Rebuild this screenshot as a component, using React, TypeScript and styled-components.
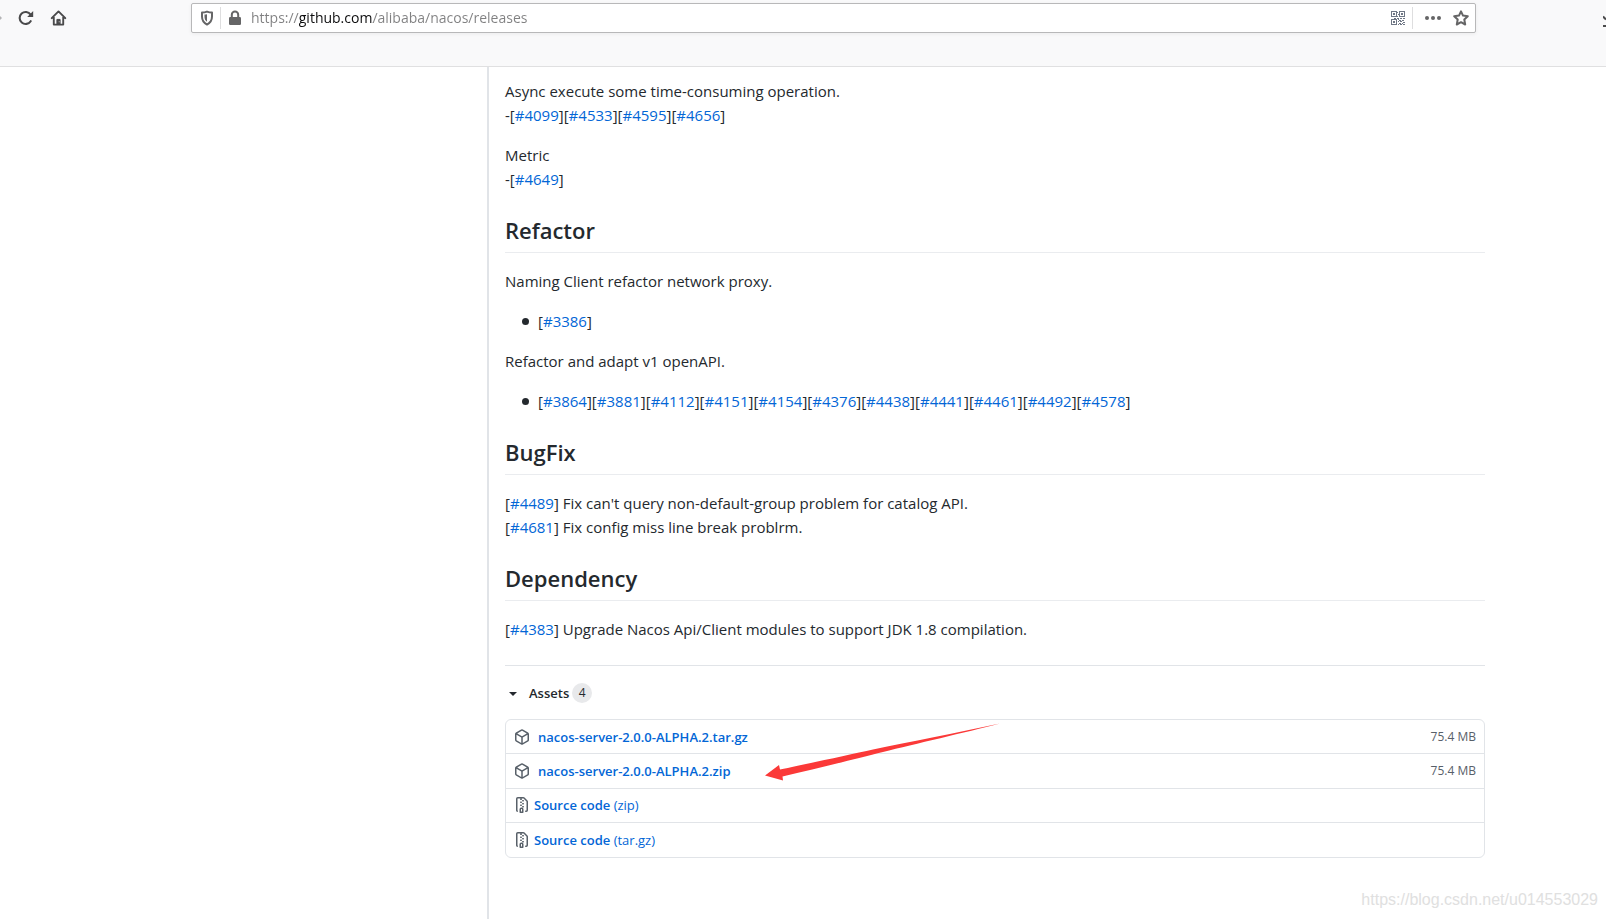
import React from "react";
import styled, { createGlobalStyle } from "styled-components";

const GlobalStyle = createGlobalStyle`
  *, *::before, *::after { box-sizing: border-box; }
  body {
    margin: 0;
    background: #fff;
    color: #24292e;
    font-family: "Open Sans", "Noto Sans", sans-serif;
    font-size: 15px;
    line-height: 24px;
  }
`;

const Page = styled.div`
  position: relative;
  display: flex;
  flex-direction: column;
  min-height: 100vh;
  overflow-x: hidden;
`;

const Toolbar = styled.header`
  display: flex;
  align-items: flex-start;
  height: 67px;
  padding-top: 3px;
  background: #f9f9fa;
  border-bottom: 1px solid #e0e0e1;
`;

const NavButtons = styled.nav`
  flex: 0 0 191px;
  display: flex;
  align-items: center;
  gap: 16px;
  height: 30px;
`;

const IconButton = styled.button<{ $color?: string }>`
  display: flex;
  flex: none;
  padding: 0;
  border: 0;
  background: none;
  color: ${(p) => p.$color ?? "#4a4a4b"};
`;

const AddressBar = styled.form`
  flex: 1;
  display: flex;
  align-items: center;
  height: 30px;
  padding: 0 6px 0 8px;
  border: 1px solid #b8b8b9;
  border-radius: 2px;
  background: #fff;
  box-shadow: 0 1px 4px rgba(0, 0, 0, 0.06);
`;

const Separator = styled.span<{ $before: number; $after: number }>`
  width: 1px;
  height: 22px;
  margin: 0 ${(p) => p.$after}px 0 ${(p) => p.$before}px;
  background: #dededf;
`;

const AddressInput = styled.input`
  flex: 1;
  min-width: 0;
  height: 26px;
  margin-left: 10px;
  padding: 0 0 1px;
  border: 0;
  outline: 0;
  font: 14px "Open Sans", "Noto Sans", sans-serif;
  color: #0c0c0d;
  background: linear-gradient(90deg, #808081 48px, #0c0c0d 48px, #0c0c0d 122px, #808081 122px);
  -webkit-background-clip: text;
  background-clip: text;
  -webkit-text-fill-color: transparent;
`;

const BarActions = styled.div`
  display: flex;
  align-items: center;
  margin-right: 12px;
`;

const ToolbarEnd = styled.div`
  flex: 0 0 130px;
  display: flex;
  justify-content: flex-end;
  align-items: center;
  height: 36px;
  overflow: hidden;
`;

const Layout = styled.main`
  flex: 1;
  display: grid;
  grid-template-columns: minmax(0, 487fr) minmax(0, 998fr) minmax(0, 121fr);
`;

const Release = styled.article`
  grid-column: 2;
  padding: 12px 0 60px 16px;
  border-left: 2px solid #e1e4e8;
`;

const Paragraph = styled.p`
  margin: 0 0 16px;
`;

const Heading = styled.h2`
  margin: 24px 0 16px;
  padding-bottom: 7px;
  border-bottom: 1px solid #eaecef;
  font-size: 22px;
  font-weight: 600;
  line-height: 30px;
`;

const IssueList = styled.ul`
  margin: 0 0 16px;
  padding-left: 17px;
  list-style: none;
`;

const IssueItem = styled.li`
  display: flex;
  align-items: center;
  gap: 9px;

  &::before {
    content: "";
    flex: none;
    width: 7px;
    height: 7px;
    border-radius: 50%;
    background: currentColor;
  }
`;

const Link = styled.a`
  color: #0366d6;
  text-decoration: none;
`;

const Assets = styled.details`
  margin-top: 24px;
  padding-top: 16px;
  border-top: 1px solid #e1e4e8;
`;

const AssetsSummary = styled.summary`
  display: flex;
  align-items: center;
  height: 21px;
  margin-bottom: 16px;
  font-size: 13px;
  font-weight: 600;
  list-style: none;
`;

const Caret = styled.span`
  margin: 3px 12px 0 4px;
  border: 4px solid transparent;
  border-top-color: currentColor;
  border-bottom-width: 0;
`;

const Counter = styled.span`
  min-width: 20px;
  margin-left: 3px;
  padding: 0 6px;
  border-radius: 10px;
  background: #e8e9eb;
  font-size: 12px;
  font-weight: 400;
  line-height: 20px;
  text-align: center;
`;

const AssetBox = styled.div`
  position: relative;
`;

const AssetList = styled.ul`
  display: grid;
  grid-auto-rows: 1fr;
  min-height: 139px;
  margin: 0;
  padding: 0;
  border: 1px solid #e1e4e8;
  border-radius: 6px;
  list-style: none;
`;

const AssetRow = styled.li`
  display: flex;
  align-items: center;
  padding: 0 8px;
  font-size: 13px;
  line-height: 20px;

  &:not(:last-child) { border-bottom: 1px solid #e1e4e8; }
`;

const AssetLink = styled(Link)<{ $gap: number }>`
  display: flex;
  align-items: center;
  gap: ${(p) => p.$gap}px;

  strong { font-weight: 600; }
  svg { color: #586069; }
`;

const AssetSize = styled.small`
  margin-left: auto;
  color: #586069;
  font-size: 12px;
`;

const Arrow = styled.svg`
  position: absolute;
  top: 4px;
  left: 260px;
  pointer-events: none;
`;

const Watermark = styled.div`
  position: absolute;
  right: 8px;
  bottom: 9px;
  color: #e0e0e0;
  font-family: "Liberation Sans", Arial, sans-serif;
  font-size: 16px;
  line-height: 20px;
`;

const ReloadIcon = () => (
  <svg width="16" height="16" viewBox="0 0 16 16" fill="none" stroke="currentColor" strokeWidth="2.1">
    <path d="M12.7 11.2A6 6 0 1 1 12.6 4.6" strokeLinecap="round" />
    <path d="M15.2 1v6H9.200z" fill="currentColor" stroke="none" />
  </svg>
);

const HomeIcon = () => (
  <svg width="17" height="18" viewBox="0 0 18 18" fill="none" stroke="currentColor" strokeWidth="2" strokeLinecap="round" strokeLinejoin="round">
    <path d="M1.800 9.200 9 2l7.200 7.200M4 8v8h10V8" />
    <path d="M7.300 15.500v-5h3.400v5z" fill="currentColor" strokeWidth="1" />
    <path d="M9.700 13h.01" stroke="#f9f9fa" strokeWidth="1" />
  </svg>
);

const ShieldIcon = () => (
  <svg width="14" height="16" viewBox="0 0 14 16" fill="none" stroke="currentColor" strokeWidth="2">
    <path d="M7 1.600c2 .8 3.500 1 5 1v4c0 4-2 6.500-5 8-3-1.500-5-4-5-8v-4c1.500 0 3-.2 5-1z" strokeLinejoin="round" />
    <path d="M7 4.200v7.600C5.300 10.600 4.500 9 4.500 6.800v-2.200c1 0 1.700-.1 2.500-.4z" fill="currentColor" stroke="none" />
  </svg>
);

const LockIcon = () => (
  <svg width="12" height="16" viewBox="0 0 12 16" fill="none">
    <path d="M2.800 8V4.800a3.200 3.200 0 0 1 6.400 0V8" stroke="currentColor" strokeWidth="2" />
    <rect y="7" width="12" height="8" rx="1.200" fill="currentColor" />
  </svg>
);

const QrIcon = () => (
  <svg width="14" height="14" viewBox="0 0 14 14" fill="none" stroke="currentColor" shapeRendering="crispEdges">
    <path d="M.5.5h5v5h-5zM8.500.5h5v5h-5zM.5 8.500h5v5h-5z" />
    <path d="M2 3h2M10 3h2M2 11h2" strokeWidth="2" />
    <path d="M6 1h1M7 3h1M6 5h1M3 7h2M6 7h2M9 7h2M12 7h2M7 8h1M8 9h2M11 9h2M7 10h1M9 10h2M12 11h2M8 12h2M11 12h1M7 13h1M9 13h2M12 13h2" strokeWidth="1" transform="translate(0 .5)" />
  </svg>
);

const MoreIcon = () => (
  <svg width="16" height="16" viewBox="0 0 16 16" fill="currentColor">
    <circle cx="2" cy="8" r="2" />
    <circle cx="8" cy="8" r="2" />
    <circle cx="14" cy="8" r="2" />
  </svg>
);

const StarIcon = () => (
  <svg width="16" height="16" viewBox="0 0 16 16" fill="none" stroke="currentColor" strokeWidth="2" strokeLinejoin="round">
    <path d="m8 1.300 2 4.300 4.800.6-3.500 3.300.9 5L8 12.200l-4.200 2.300.9-5L1.200 6.200 6 5.600z" />
  </svg>
);

const DownloadIcon = () => (
  <svg width="3" height="12" viewBox="0 0 3 12" fill="none" stroke="currentColor" strokeWidth="2">
    <path d="M0 1.500 3 4.500M0 11h3" />
  </svg>
);

const PackageIcon = () => (
  <svg width="16" height="16" viewBox="0 0 16 16" fill="currentColor" fillRule="evenodd">
    <path d="M8.878.392a1.750 1.750 0 00-1.756 0l-5.250 3.045A1.750 1.750 0 001 4.951v6.098c0 .624.332 1.200.872 1.514l5.250 3.045a1.750 1.750 0 001.756 0l5.250-3.045c.54-.313.872-.89.872-1.514V4.951c0-.624-.332-1.200-.872-1.514L8.878.392zM7.875 1.690a.25.25 0 01.25 0l4.630 2.685L8 7.133 3.245 4.375l4.630-2.685zM2.500 5.677v5.372c0 .09.047.171.125.216l4.625 2.683V8.432L2.500 5.677zm6.250 8.271l4.625-2.683a.25.25 0 00.125-.216V5.677L8.750 8.432v5.516z" />
  </svg>
);

const ZipIcon = () => (
  <svg width="16" height="16" viewBox="0 0 16 16" fill="currentColor" fillRule="evenodd">
    <path d="M3.500 1.750a.25.25 0 01.25-.25h3a.75.75 0 000 1.500h.5a.75.75 0 000-1.500h2.086a.25.25 0 01.177.073l2.914 2.914a.25.25 0 01.073.177v8.586a.25.25 0 01-.25.25h-.5a.75.75 0 000 1.500h.5A1.750 1.750 0 0014 13.250V4.664c0-.464-.184-.909-.513-1.237L10.573.513A1.750 1.750 0 009.336 0H3.750A1.750 1.750 0 002 1.750v11.500c0 .649.353 1.214.874 1.515a.75.75 0 10.752-1.298.25.25 0 01-.126-.217V1.750zM8.750 3a.75.75 0 000 1.500h.5a.75.75 0 000-1.500h-.5zM6 5.250a.75.75 0 01.75-.75h.5a.75.75 0 010 1.500h-.5A.75.75 0 016 5.250zm2 1.500A.75.75 0 018.750 6h.5a.75.75 0 010 1.500h-.5A.75.75 0 018 6.750zm-1.250.75a.75.75 0 000 1.500h.5a.75.75 0 000-1.500h-.5zM8 9.750A.75.75 0 018.750 9h.5a.75.75 0 010 1.500h-.5A.75.75 0 018 9.750zm-.75.75a1.750 1.750 0 00-1.750 1.750v3c0 .414.336.75.75.75h2.500a.75.75 0 00.75-.75v-3a1.750 1.750 0 00-1.750-1.750h-.5zM7 12.250a.25.25 0 01.25-.25h.5a.25.25 0 01.25.25v2.250H7v-2.250z" />
  </svg>
);

const Issues = ({ ids }: { ids: number[] }) => (
  <span>
    {ids.map((id) => (
      <React.Fragment key={id}>
        [<Link href={`https://github.com/alibaba/nacos/issues/${id}`}>#{id}</Link>]
      </React.Fragment>
    ))}
  </span>
);

const assets = [
  { name: "nacos-server-2.0.0-ALPHA.2.tar.gz", size: "75.4 MB" },
  { name: "nacos-server-2.0.0-ALPHA.2.zip", size: "75.4 MB" },
  { name: "Source code", format: "(zip)" },
  { name: "Source code", format: "(tar.gz)" },
];

export default function App() {
  return (
    <Page>
      <GlobalStyle />
      <Toolbar>
        <NavButtons aria-label="Browser">
          <IconButton aria-label="Forward" $color="#b4b4b5">
            <svg width="2" height="4" viewBox="0 0 2 4" fill="currentColor"><path d="M0 0l2 2-2 2z" /></svg>
          </IconButton>
          <IconButton aria-label="Reload"><ReloadIcon /></IconButton>
          <IconButton aria-label="Home"><HomeIcon /></IconButton>
        </NavButtons>
        <AddressBar onSubmit={(e) => e.preventDefault()}>
          <IconButton type="button" aria-label="Tracking protection" $color="#656566"><ShieldIcon /></IconButton>
          <Separator $before={6} $after={8} />
          <IconButton type="button" aria-label="Connection secure" $color="#656566"><LockIcon /></IconButton>
          <AddressInput aria-label="Address" defaultValue="https://github.com/alibaba/nacos/releases" spellCheck={false} />
          <BarActions>
            <IconButton type="button" aria-label="QR code" $color="#6f7785"><QrIcon /></IconButton>
            <Separator $before={7} $after={12} />
            <IconButton type="button" aria-label="Page actions" $color="#656566"><MoreIcon /></IconButton>
          </BarActions>
          <IconButton type="button" aria-label="Bookmark" $color="#656566"><StarIcon /></IconButton>
        </AddressBar>
        <ToolbarEnd>
          <IconButton aria-label="Downloads"><DownloadIcon /></IconButton>
        </ToolbarEnd>
      </Toolbar>

      <Layout>
        <Release>
          <Paragraph>
            Async execute some time-consuming operation.<br />
            -<Issues ids={[4099, 4533, 4595, 4656]} />
          </Paragraph>
          <Paragraph>
            Metric<br />
            -<Issues ids={[4649]} />
          </Paragraph>

          <Heading>Refactor</Heading>
          <Paragraph>Naming Client refactor network proxy.</Paragraph>
          <IssueList>
            <IssueItem><Issues ids={[3386]} /></IssueItem>
          </IssueList>
          <Paragraph>Refactor and adapt v1 openAPI.</Paragraph>
          <IssueList>
            <IssueItem>
              <Issues ids={[3864, 3881, 4112, 4151, 4154, 4376, 4438, 4441, 4461, 4492, 4578]} />
            </IssueItem>
          </IssueList>

          <Heading>BugFix</Heading>
          <Paragraph>
            <Issues ids={[4489]} /> Fix can't query non-default-group problem for catalog API.<br />
            <Issues ids={[4681]} /> Fix config miss line break problrm.
          </Paragraph>

          <Heading>Dependency</Heading>
          <Paragraph>
            <Issues ids={[4383]} /> Upgrade Nacos Api/Client modules to support JDK 1.8 compilation.
          </Paragraph>

          <Assets open>
            <AssetsSummary>
              <Caret />
              Assets
              <Counter>4</Counter>
            </AssetsSummary>
            <AssetBox>
              <AssetList>
                {assets.map(({ name, size, format }) => (
                  <AssetRow key={name + (format ?? "")}>
                    <AssetLink href="#" $gap={format ? 4 : 8}>
                      {format ? <ZipIcon /> : <PackageIcon />}
                      <span><strong>{name}</strong>{format && ` ${format}`}</span>
                    </AssetLink>
                    {size && <AssetSize>{size}</AssetSize>}
                  </AssetRow>
                ))}
              </AssetList>
              <Arrow width="236" height="60" viewBox="0 0 236 60" fill="#fb3938" aria-hidden="true">
                <path d="M0 52.500 14 42l1 4.500C40 41.500 85 31.500 108 26.500 145 19 190 10 235 .500 200 9.500 150 21 118 29 90 36 50 46 17.500 53.500l.5 4z" />
              </Arrow>
            </AssetBox>
          </Assets>
        </Release>
      </Layout>
      <Watermark>https://blog.csdn.net/u014553029</Watermark>
    </Page>
  );
}
